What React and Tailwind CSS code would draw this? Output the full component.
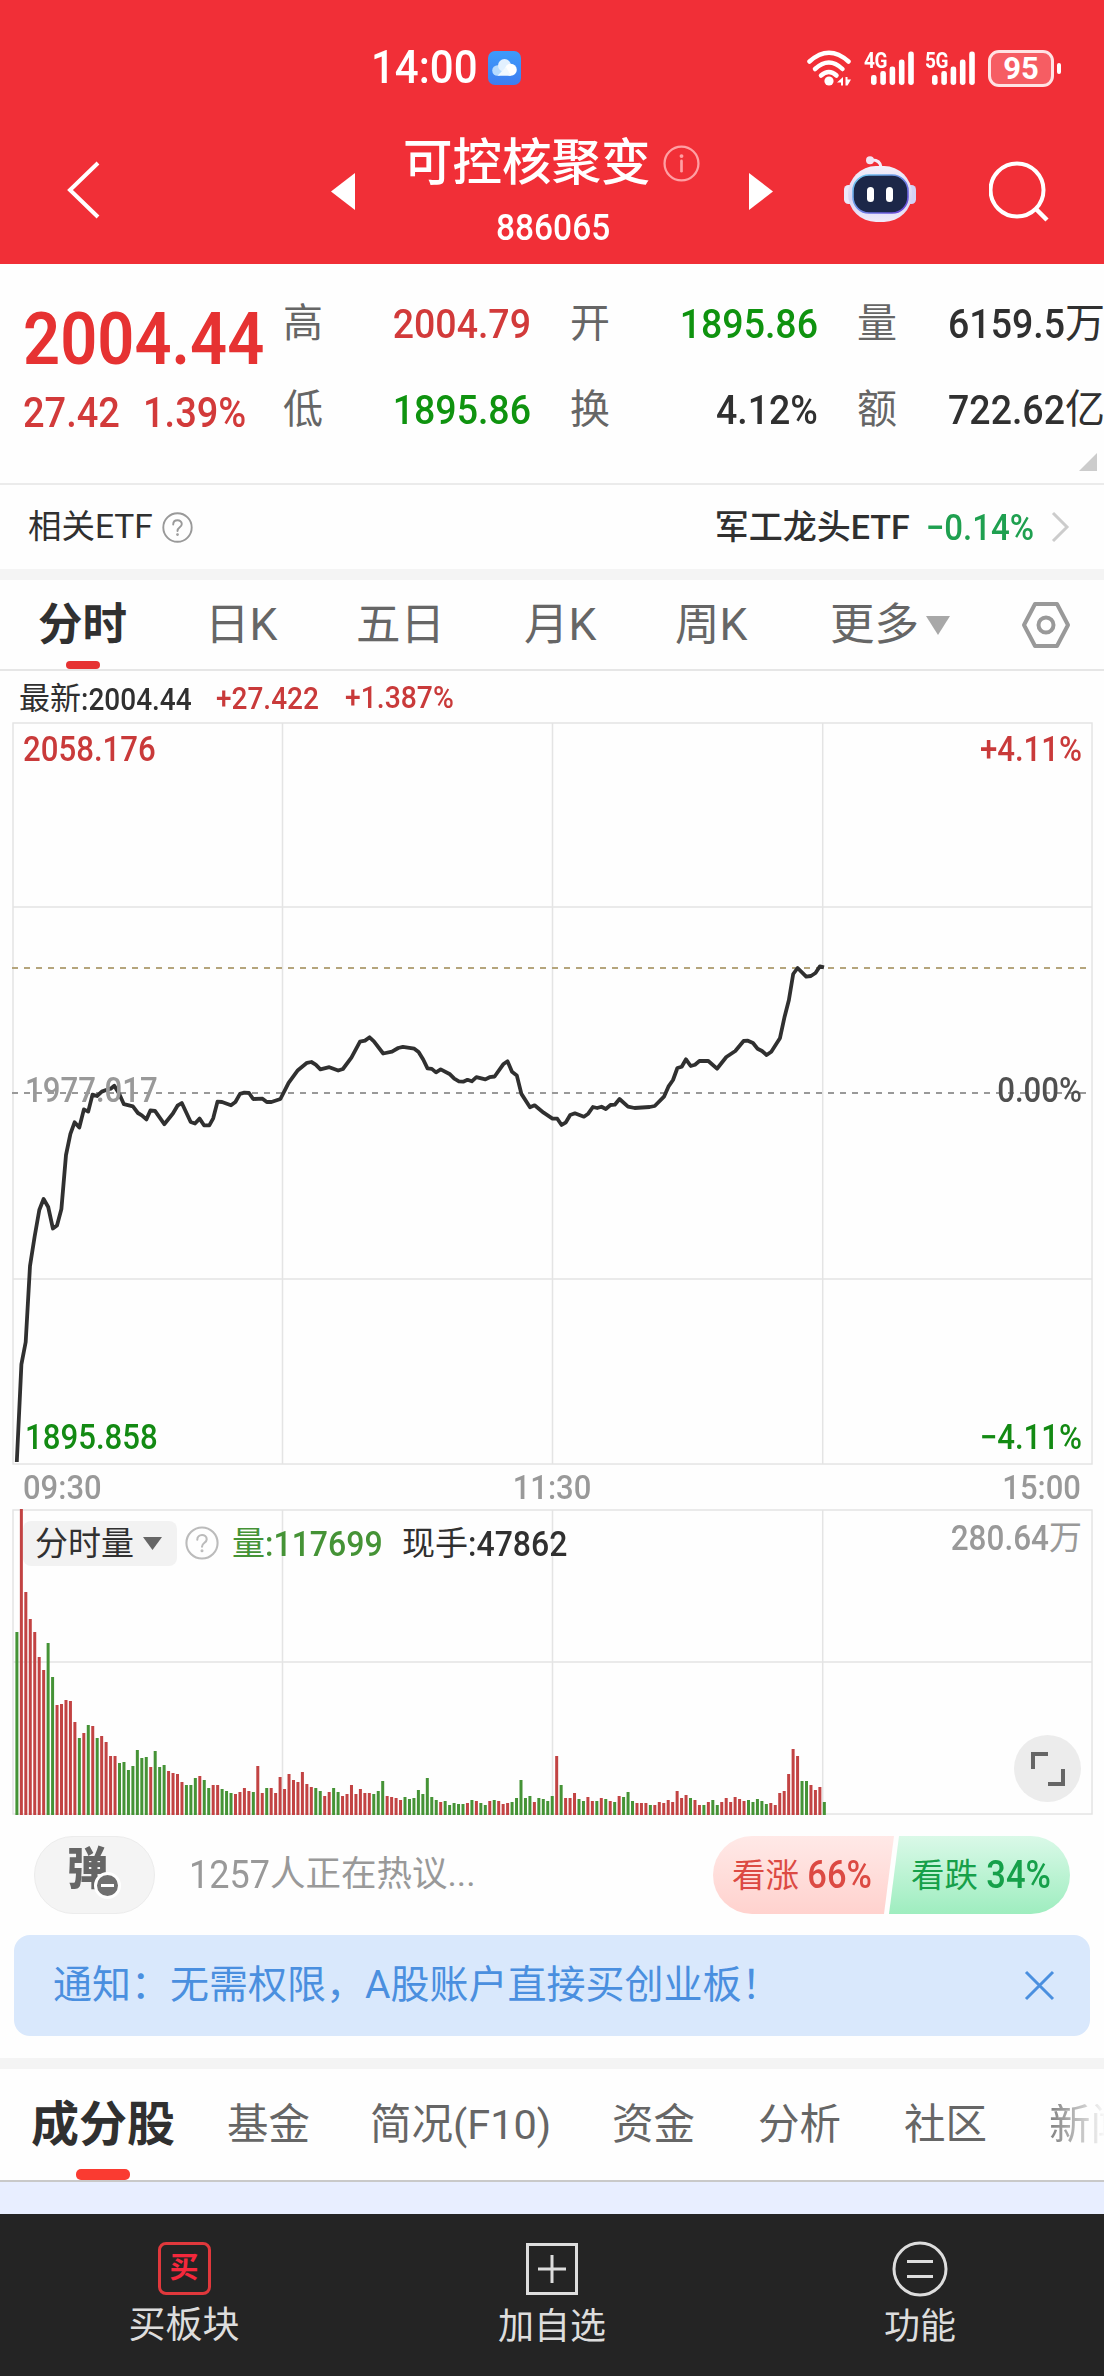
import clsx from "clsx";

const PRICE_POINTS =
  "16.8,1462 21.4,1364.3 25.7,1342 30,1266 34.6,1236.7 39.3,1210 43.6,1199 48.2,1207 52.9,1228.5 57,1225.5 61.4,1209 66,1155 70.4,1133.8 74.6,1122.3 79.3,1127.5 83.9,1109.4 88.2,1111.6 92.5,1094.6 97,1096 101.8,1091.6 106,1090 110.7,1088.7 114.3,1085.7 119.3,1093.9 123.9,1104.2 132.9,1106.4 137.9,1113 141.8,1115.3 146.4,1119.4 150.4,1110.5 155,1110.9 164.3,1124.2 172.9,1113.5 177.5,1105.7 181.8,1103 190.7,1122 195,1123.5 199.6,1118.6 204,1125.3 209.3,1125.3 213.2,1118.3 217.5,1101.6 222,1102 231,1105.3 235.4,1102 240,1093.9 244.3,1092.7 249,1093 253.2,1099 262.5,1098.7 266.8,1102 271.4,1102 280.4,1099 288.6,1082.8 297.9,1070.2 307,1062.8 311.4,1062 315.7,1064.6 320.4,1069.4 329.3,1067.2 338.2,1070.5 342.9,1069 351.4,1057.6 360,1041.7 365,1040.6 369.6,1037.3 373.9,1041.3 383.2,1053.5 392,1051.7 398.2,1048 402.9,1046.9 414.3,1048.7 418.6,1052 423.2,1059.5 427.5,1068.3 431.8,1068.9 436,1072.4 440.7,1069.4 450,1074.3 454.3,1078.7 458.9,1081.3 463.2,1081.7 467.5,1079.8 471.8,1081.3 476.4,1077.2 485.4,1079.4 489.6,1077.2 494.6,1076.5 503.2,1064.3 507.5,1061.3 512,1071.7 516.8,1075.4 521.4,1093.9 530,1107.2 534.6,1105.3 543.6,1112.7 552.5,1118.6 557.3,1118.7 561.6,1125 565.9,1122.3 570.2,1115 574.9,1113.3 583.9,1116.7 588.2,1113.7 592.9,1107 597.2,1108 601.5,1106.7 605.8,1109 610.5,1105 614.8,1104.7 619.5,1099 628,1106.7 634.6,1108 649.7,1107 654.7,1106 664,1096.7 668.4,1086.7 673,1080 677.4,1068 681.7,1066.7 686,1059.3 690.7,1066 695,1064.7 699.4,1061 708.3,1061 717,1068.7 726.3,1057 735.3,1051 743.6,1041 747.9,1040.7 753,1043 757.6,1048.7 762,1051 766.6,1055 771.3,1051.7 779.9,1038.3 784.6,1016.7 788.9,1000 793.2,974 797.6,968 806.2,976.7 810.9,976 815.5,973 819.9,966.3 824,967.3";

// one entry per minute: colour (r = up, g = down) + height
const VOLUME =
  "g183 r306 r223 r196 r183 r158 r145 g172 g138 r110 r111 r115 r114 r93 g77 r82 g90 r89 g77 r79 r73 r59 r59 g52 g53 g45 g49 g65 g57 g58 r48 g64 g48 g50 r44 r42 r41 r33 g30 g30 g37 r39 g35 g27 r30 r30 g26 g24 g22 r21 r23 r27 r24 g23 r49 r22 g27 r27 r22 r38 r26 r41 r35 r33 r43 r31 r28 g27 g24 r19 r23 g27 g23 r19 r21 r30 r21 r26 r22 r22 g21 g24 g34 r19 r18 r17 r15 g18 g16 g17 g25 g21 g37 g18 g15 r13 g14 g10 g12 g11 g11 r12 g15 r14 g12 g10 r14 g15 r14 r11 r12 g13 g17 g35 g17 g19 r13 g17 g16 g14 g19 r59 g30 r17 r17 r22 g16 g14 r18 r14 g14 r17 g16 r14 g13 r19 g18 g23 g14 r12 r12 r12 g10 r10 r13 r12 r15 r13 r24 r17 r20 g17 r15 r10 g10 r13 g15 g10 r13 r17 r13 r18 r16 r14 g15 g13 g16 g14 g11 r12 r10 r22 r24 r41 r66 r59 g34 g34 r30 r25 r28 g13".split(" ");

const QUOTES = [
  [
    { label: "高", value: "2004.79", color: "text-[#d23a3a]" },
    { label: "开", value: "1895.86", color: "text-[#0f930f]" },
    { label: "量", value: "6159.5", unit: "万", color: "text-[#303030]" },
  ],
  [
    { label: "低", value: "1895.86", color: "text-[#0f930f]" },
    { label: "换", value: "4.12%", color: "text-[#303030]" },
    { label: "额", value: "722.62", unit: "亿", color: "text-[#303030]" },
  ],
];

// tall narrow digits
function Num({ className, children }) {
  return <span className={clsx("inline-block scale-y-110 whitespace-nowrap font-medium", className)}>{children}</span>;
}

function Signal({ label }) {
  const tops = [24, 20, 15.5, 8.5, 0.5];
  return (
    <div className="relative h-[34px] w-[50px]">
      <span className="absolute left-0 top-0 origin-top scale-y-120 text-[19px] font-bold leading-[15px] tracking-[-0.5px]">{label}</span>
      <svg className="absolute inset-0" width="50" height="34" fill="#fff">
        {tops.map((t, i) => (
          <rect key={t} x={7 + i * 9.3} y={t} width="5.6" height={34 - t} rx="2.4" />
        ))}
      </svg>
    </div>
  );
}

function Robot() {
  return (
    <svg width="72" height="67" viewBox="0 0 72 67">
      <defs>
        <linearGradient id="head" x1="0" y1="0" x2="0" y2="1">
          <stop offset="0" stopColor="#f4f0fa" />
          <stop offset="0.6" stopColor="#d9d5f2" />
          <stop offset="1" stopColor="#f0eafa" />
        </linearGradient>
        <linearGradient id="rim" x1="0" y1="0" x2="1" y2="1">
          <stop offset="0" stopColor="#6fd0f0" />
          <stop offset="1" stopColor="#6a3fd8" />
        </linearGradient>
      </defs>
      <path d="M26 4 Q36 3 37 11" fill="none" stroke="#f4ecfa" strokeWidth="3" />
      <circle cx="26" cy="4.200" r="4" fill="#f4e4f2" />
      <rect x="0" y="29" width="10" height="19" rx="4.500" fill="#ece8fa" />
      <rect x="62" y="29" width="10" height="19" rx="4.500" fill="#d4d2f6" />
      <rect x="4" y="10" width="64" height="56" rx="28" fill="url(#head)" />
      <rect x="9" y="19" width="55" height="38" rx="16" fill="#1c2748" stroke="url(#rim)" strokeWidth="1.6" />
      <rect x="23" y="31" width="7" height="15" rx="3.500" fill="#fff" />
      <rect x="42" y="31" width="7" height="15" rx="3.500" fill="#fff" />
    </svg>
  );
}

function Help({ size, color, letter = "?" }) {
  return (
    <svg width={size} height={size} viewBox="0 0 36 36" fill="none" stroke={color} strokeLinecap="round">
      <circle cx="18" cy="18" r="16.500" strokeWidth="2.200" />
      {letter === "?" ? (
        <>
          <path d="M13 14.500 C13 8 23 8 23 14 C23 18 18 17.500 18 22" strokeWidth="2.200" />
          <circle cx="18" cy="26.200" r="0.700" strokeWidth="1.800" />
        </>
      ) : (
        <>
          <path d="M18 15.500 V25.500" strokeWidth="2.600" />
          <circle cx="18" cy="10.800" r="0.900" strokeWidth="2" />
        </>
      )}
    </svg>
  );
}

function Header() {
  return (
    <header className="h-[264px] bg-[#f12f37] text-white">
      <div className="flex h-[136px] items-center">
        <div className="ml-[371px] flex w-[436px] items-center">
          <Num className="w-[117px] text-[42px] leading-none">14:00</Num>
          <svg width="33" height="34" viewBox="0 0 33 34">
            <defs>
              <linearGradient id="sky" x1="0" y1="0" x2="0" y2="1">
                <stop offset="0" stopColor="#3d9bfb" />
                <stop offset="1" stopColor="#3f7df0" />
              </linearGradient>
            </defs>
            <rect width="33" height="34" rx="7" fill="url(#sky)" />
            <circle cx="9.500" cy="19.500" r="5.300" fill="#b7dbff" />
            <circle cx="16.500" cy="14.500" r="6.500" fill="#e3f1ff" />
            <circle cx="22.800" cy="18.800" r="6" fill="#fff" />
            <path d="M9.500 24.800 L18 16 L23 24.800 Z" fill="#f2f9ff" />
          </svg>
        </div>
        <svg className="mr-[12px]" width="45" height="36" viewBox="0 0 45 36" fill="none" stroke="#fff" strokeWidth="4.500" strokeLinecap="round">
          <path d="M2.500 11.500 Q22 -6 41.500 11.500" />
          <path d="M8 19 Q22 6 35.500 19" />
          <path d="M14 25.500 Q22 18.500 29.500 25.500" />
          <circle cx="22" cy="31" r="4.600" fill="#fff" stroke="none" />
          <path d="M36 27 V35.500 H34 V32.500 H30 Z M38.500 27 H40.500 V29.500 H44 L40.500 35.500 H38.500 Z" fill="#fff" stroke="none" />
        </svg>
        <Signal label="4G" />
        <div className="w-[11px]" />
        <Signal label="5G" />
        <div className="ml-[13px] flex h-[37px] w-[66px] items-center justify-center rounded-[11px] border-[3px] border-[#ffe3e4] bg-[#f65d63]">
          <span className="text-[31px] font-bold leading-none">95</span>
        </div>
        <div className="ml-[3px] h-[11px] w-[4px] rounded-full bg-white" />
      </div>
      <div className="grid h-[110px] grid-cols-[331px_72px_298px_49px_94px_145px_1fr] items-center">
        <svg className="ml-[66px] mt-[-2px]" width="36" height="60" fill="none" stroke="#fff" strokeWidth="4">
          <path d="M32 3 L4 30 L32 57" />
        </svg>
        <svg width="24" height="37" fill="#fff">
          <path d="M0 18.500 L24 0 V37 Z" />
        </svg>
        <div className="flex flex-col">
          <div className="flex h-[52px] items-center">
            <span className="w-[260px] whitespace-nowrap text-[49.5px] font-medium leading-[52px]">可控核聚变</span>
            <Help size={37} color="#ff9fa3" letter="i" />
          </div>
          <Num className="ml-[93px] mt-[22px] text-[33.5px] leading-[34px]">886065</Num>
        </div>
        <svg className="ml-[48px]" width="24" height="37" fill="#fff">
          <path d="M24 18.500 L0 0 V37 Z" />
        </svg>
        <div />
        <div className="-mt-1"><Robot /></div>
        <svg width="64" height="62" fill="none" stroke="#fff" strokeWidth="4">
          <circle cx="28" cy="30" r="26.500" />
          <path d="M47 49 L58 60" strokeWidth="4.500" />
        </svg>
      </div>
    </header>
  );
}

function Quote() {
  return (
    <section className="relative flex h-[221px] border-b-2 border-[#ebebeb]">
      <div className="w-[283px] shrink-0 pl-[23px]">
        <div className="mt-[42px] h-[68px] text-[#e63232]">
          <Num className="text-[65px] font-semibold leading-[68px]">2004.44</Num>
        </div>
        <div className="mt-[19px] flex text-[38px] leading-[40px] text-[#d23a3a]">
          <Num className="w-[120px]">27.42</Num>
          <Num>1.39%</Num>
        </div>
      </div>
      <div className="mt-[30px] flex flex-col gap-[26px]">
        {QUOTES.map((row) => (
          <div key={row[0].label} className="flex h-[60px] items-center gap-[39px] text-[37.5px] leading-[60px]">
            {row.map((q) => (
              <div key={q.label} className="flex w-[248px] justify-between">
                <span className="text-[40px] text-[#666]">{q.label}</span>
                <span className={clsx("flex", q.color)}>
                  <Num>{q.value}</Num>
                  {q.unit && <span className="text-[40px]">{q.unit}</span>}
                </span>
              </div>
            ))}
          </div>
        ))}
      </div>
      <svg className="absolute bottom-[12px] right-[7px]" width="18" height="18" fill="#ccc">
        <path d="M18 0 V18 H0 Z" />
      </svg>
    </section>
  );
}

function EtfRow() {
  return (
    <section className="flex h-[84px] items-center text-[33.5px] leading-none text-[#303030]">
      <span className="ml-[28px] w-[134px]">相关ETF</span>
      <Help size={31} color="#999" />
      <span className="ml-auto mr-[16px] text-[34px] font-medium">军工龙头ETF</span>
      <Num className="text-[33px] text-[#1fa050]">−0.14%</Num>
      <svg className="ml-[17px] mr-[34px]" width="19" height="32" fill="none" stroke="#ccc" strokeWidth="3">
        <path d="M2 2 L16 16 L2 30" />
      </svg>
    </section>
  );
}

function PeriodTabs() {
  return (
    <section className="grid h-[91px] grid-cols-[167px_151px_168px_151px_155px_191px_1fr] items-center border-b-2 border-[#e6e6e6] pl-[38px] pt-px text-[44.5px] leading-none text-[#666]">
      <div className="relative flex h-full items-center font-bold text-[#303030]">
        分时
        <div className="absolute bottom-0 left-[28px] h-[8px] w-[34px] rounded-[4px] bg-[#e63232]" />
      </div>
      <span>日K</span>
      <span>五日</span>
      <span>月K</span>
      <span>周K</span>
      <span className="flex items-center gap-[7px]">
        更多
        <svg width="24" height="19" fill="#a8a8a8">
          <path d="M0 0 H24 L12 19 Z" />
        </svg>
      </span>
      <svg width="50" height="48" fill="none" stroke="#999" strokeWidth="4" strokeLinejoin="round">
        <path d="M14 3 H36 L47 24 L36 45 H14 L3 24 Z" />
        <circle cx="25" cy="24" r="7.500" />
      </svg>
    </section>
  );
}

function PriceChart() {
  return (
    <section className="relative h-[743px]">
      <svg className="absolute inset-0" width="1104" height="743" viewBox="0 722 1104 743" fill="none">
        <g stroke="#e4e4e4" strokeWidth="1.500">
          <rect x="13" y="723" width="1079" height="741" />
          <path d="M13 907 H1092 M13 1279 H1092 M282.500 723 V1464 M552.500 723 V1464 M822.700 723 V1464" />
        </g>
        <path d="M12 968 H1092" stroke="#b5a57c" strokeWidth="2" strokeDasharray="6 6" />
        <path d="M12 1093 H1092" stroke="#999" strokeWidth="2" strokeDasharray="6 6" />
        <polyline points={PRICE_POINTS} stroke="#303030" strokeWidth="3.800" strokeLinejoin="round" />
      </svg>
      <div className="relative flex h-full flex-col justify-between pl-[25px] pr-[22px] text-[31.2px] leading-[34px]">
        <div className="mt-[11px] -ml-[2px] flex justify-between text-[#c93a3a]">
          <Num>2058.176</Num>
          <Num>+4.11%</Num>
        </div>
        <div className="mt-[-7px] flex justify-between">
          <Num className="text-[#999]">1977.017</Num>
          <Num className="text-[#505050]">0.00%</Num>
        </div>
        <div className="mb-[10px] flex justify-between text-[#138a13]">
          <Num>1895.858</Num>
          <Num>−4.11%</Num>
        </div>
      </div>
    </section>
  );
}

function VolumeChart() {
  return (
    <section className="relative h-[306px]">
      <svg className="absolute inset-0" width="1104" height="306" fill="none">
        <g stroke="#e4e4e4" strokeWidth="1.500">
          <rect x="13" y="1" width="1079" height="304" />
          <path d="M13 153 H1092 M282.500 1 V305 M552.500 1 V305 M822.700 1 V305" />
        </g>
        {VOLUME.map((v, i) => (
          <rect
            key={i}
            x={15.4 + i * 4.461}
            y={306 - Number(v.slice(1))}
            width="3"
            height={Number(v.slice(1))}
            fill={v[0] === "r" ? "#c24343" : "#459336"}
          />
        ))}
      </svg>
      <div className="relative flex h-[68px] items-center text-[33px] leading-none text-[#303030]">
        <div className="ml-[23px] flex h-[45px] w-[154px] items-center gap-[9px] rounded-[8px] bg-[#f2f2f2] pl-[12px]">
          分时量
          <svg width="19" height="13" fill="#666">
            <path d="M0 0 H19 L9.500 13 Z" />
          </svg>
        </div>
        <div className="ml-[8px] mr-[13px]"><Help size={34} color="#bbb" /></div>
        <span className="w-[170px] text-[#459336]">
          量<Num className="text-[32px]">:117699</Num>
        </span>
        <span>
          现手<Num className="text-[32px]">:47862</Num>
        </span>
        <span className="mb-[11px] ml-auto mr-[22px] text-[#999]">
          <Num className="text-[31.5px]">280.64</Num>万
        </span>
      </div>
      <div className="absolute bottom-[13px] right-[23px] flex size-[67px] items-center justify-center rounded-full bg-[#ececec]">
        <svg width="36" height="36" fill="none" stroke="#666" strokeWidth="4">
          <path d="M3 18 V3 H18 M33 18 V33 H18" />
        </svg>
      </div>
    </section>
  );
}

function Discussion() {
  return (
    <section className="flex h-[120px] items-center pl-[34px] pr-[34px]">
      <div className="relative flex h-[78px] w-[121px] items-center border border-[#ececec] justify-center rounded-full bg-[#f4f4f4]">
        <span className="mb-[10px] mr-[14px] scale-y-110 text-[41px] font-black leading-none text-[#666]">弹</span>
        <div className="absolute left-[59px] top-[35px] flex size-[27px] items-center justify-center rounded-full border-[3px] border-white bg-[#707070]">
          <div className="h-[3px] w-[13px] bg-white" />
        </div>
      </div>
      <span className="ml-[34px] flex items-center text-[35.5px] leading-none text-[#999]">
        <Num className="text-[36px] font-normal">1257</Num>人正在热议...
      </span>
      <div className="relative ml-auto h-[78px] w-[357px] text-[33.5px] leading-[78px]">
        <svg className="absolute inset-0" width="357" height="78">
          <defs>
            <linearGradient id="up" x1="0" y1="0" x2="0" y2="1">
              <stop offset="0" stopColor="#ffe9e7" />
              <stop offset="1" stopColor="#ffd2ce" />
            </linearGradient>
            <linearGradient id="down" x1="0" y1="0" x2="0" y2="1">
              <stop offset="0" stopColor="#daf9e8" />
              <stop offset="1" stopColor="#9eedbf" />
            </linearGradient>
          </defs>
          <path d="M39 0 H181 L171 78 H39 A39 39 0 0 1 39 0 Z" fill="url(#up)" />
          <path d="M186 0 H318 A39 39 0 0 1 318 78 H176 Z" fill="url(#down)" />
        </svg>
        <div className="relative flex whitespace-nowrap">
          <span className="ml-[19px] w-[179px] text-[#dc4a43]">看涨 <Num className="text-[34.5px]">66%</Num></span>
          <span className="text-[#16a04a]">看跌 <Num className="text-[34.5px]">34%</Num></span>
        </div>
      </div>
    </section>
  );
}

function Notice() {
  return (
    <div className="mx-[14px] flex h-[101px] items-center justify-between rounded-[16px] bg-[#d9e8fc] pl-[39px] pr-[35px] text-[39px] leading-none text-[#4a8fdf]">
      <span>通知：无需权限，A股账户直接买创业板！</span>
      <svg width="31" height="31" fill="none" stroke="#4a8fdf" strokeWidth="3">
        <path d="M2 2 L29 29 M29 2 L2 29" />
      </svg>
    </div>
  );
}

function SectionTabs() {
  return (
    <section className="relative flex h-[113px] items-center overflow-hidden whitespace-nowrap border-b-2 border-[#c9c9c9] text-[41.5px] leading-none text-[#666]">
      <span className="ml-[31px] w-[196px] shrink-0 text-[48px] font-bold text-[#303030]">成分股</span>
      <span className="w-[143px] shrink-0">基金</span>
      <span className="w-[242px] shrink-0">简况(F10)</span>
      <span className="w-[146px] shrink-0">资金</span>
      <span className="w-[146px] shrink-0">分析</span>
      <span className="w-[145px] shrink-0">社区</span>
      <span className="shrink-0 bg-gradient-to-r from-[#888] from-5% to-[#fff] to-70% bg-clip-text text-transparent">新闻</span>
      <div className="absolute bottom-0 left-[76px] h-[11px] w-[54px] rounded-[5px] bg-[#fa3b31]" />
    </section>
  );
}

function BottomNav() {
  return (
    <nav className="flex h-[162px] bg-[#242424] text-[36px] leading-none text-[#ddd]">
      <div className="flex w-[368px] flex-col items-center pt-[28px]">
        <div className="flex size-[53px] items-center justify-center rounded-[8px] border-[3px] border-[#e0383c] text-[29px] font-bold text-[#f5283c]">买</div>
        <span className="mt-[12px] text-[37px]">买板块</span>
      </div>
      <div className="flex w-[368px] flex-col items-center pt-[29px]">
        <svg width="52" height="52" fill="none" stroke="#ddd" strokeWidth="3">
          <rect x="1.500" y="1.500" width="49" height="49" />
          <path d="M26 12 V40 M12 26 H40" />
        </svg>
        <span className="mt-[14px]">加自选</span>
      </div>
      <div className="flex w-[368px] flex-col items-center pt-[27px]">
        <svg width="56" height="56" fill="none" stroke="#ddd" strokeWidth="3">
          <circle cx="28" cy="28" r="26" />
          <path d="M15 20.500 H41 M15 35.500 H41" />
        </svg>
        <span className="mt-[12px]">功能</span>
      </div>
    </nav>
  );
}

export default function App() {
  return (
    <div className="h-[2376px] w-[1104px] overflow-hidden bg-[#fefefe] font-[Roboto,'Noto_Sans_CJK_SC',sans-serif]">
      <Header />
      <Quote />
      <EtfRow />
      <div className="h-[11px] bg-[#f4f4f4]" />
      <PeriodTabs />
      <div className="flex h-[51px] items-center pl-[19px] pt-[4px] text-[28px] leading-none text-[#303030]">
        <span className="w-[197px] whitespace-nowrap">
          <span className="text-[31px]">最新</span>
          <Num>:2004.44</Num>
        </span>
        <Num className="w-[129px] text-[#c93a3a]">+27.422</Num>
        <Num className="text-[28.3px] text-[#c93a3a]">+1.387%</Num>
      </div>
      <PriceChart />
      <div className="grid h-[44px] grid-cols-3 items-center px-[23px] text-[31px] leading-none text-[#999]">
        <Num>09:30</Num>
        <Num className="text-center">11:30</Num>
        <Num className="text-right">15:00</Num>
      </div>
      <VolumeChart />
      <Discussion />
      <Notice />
      <div className="mt-[22px] h-[11px] bg-[#f4f4f4]" />
      <SectionTabs />
      <div className="h-[32px] bg-[#e8eeff]" />
      <BottomNav />
    </div>
  );
}
